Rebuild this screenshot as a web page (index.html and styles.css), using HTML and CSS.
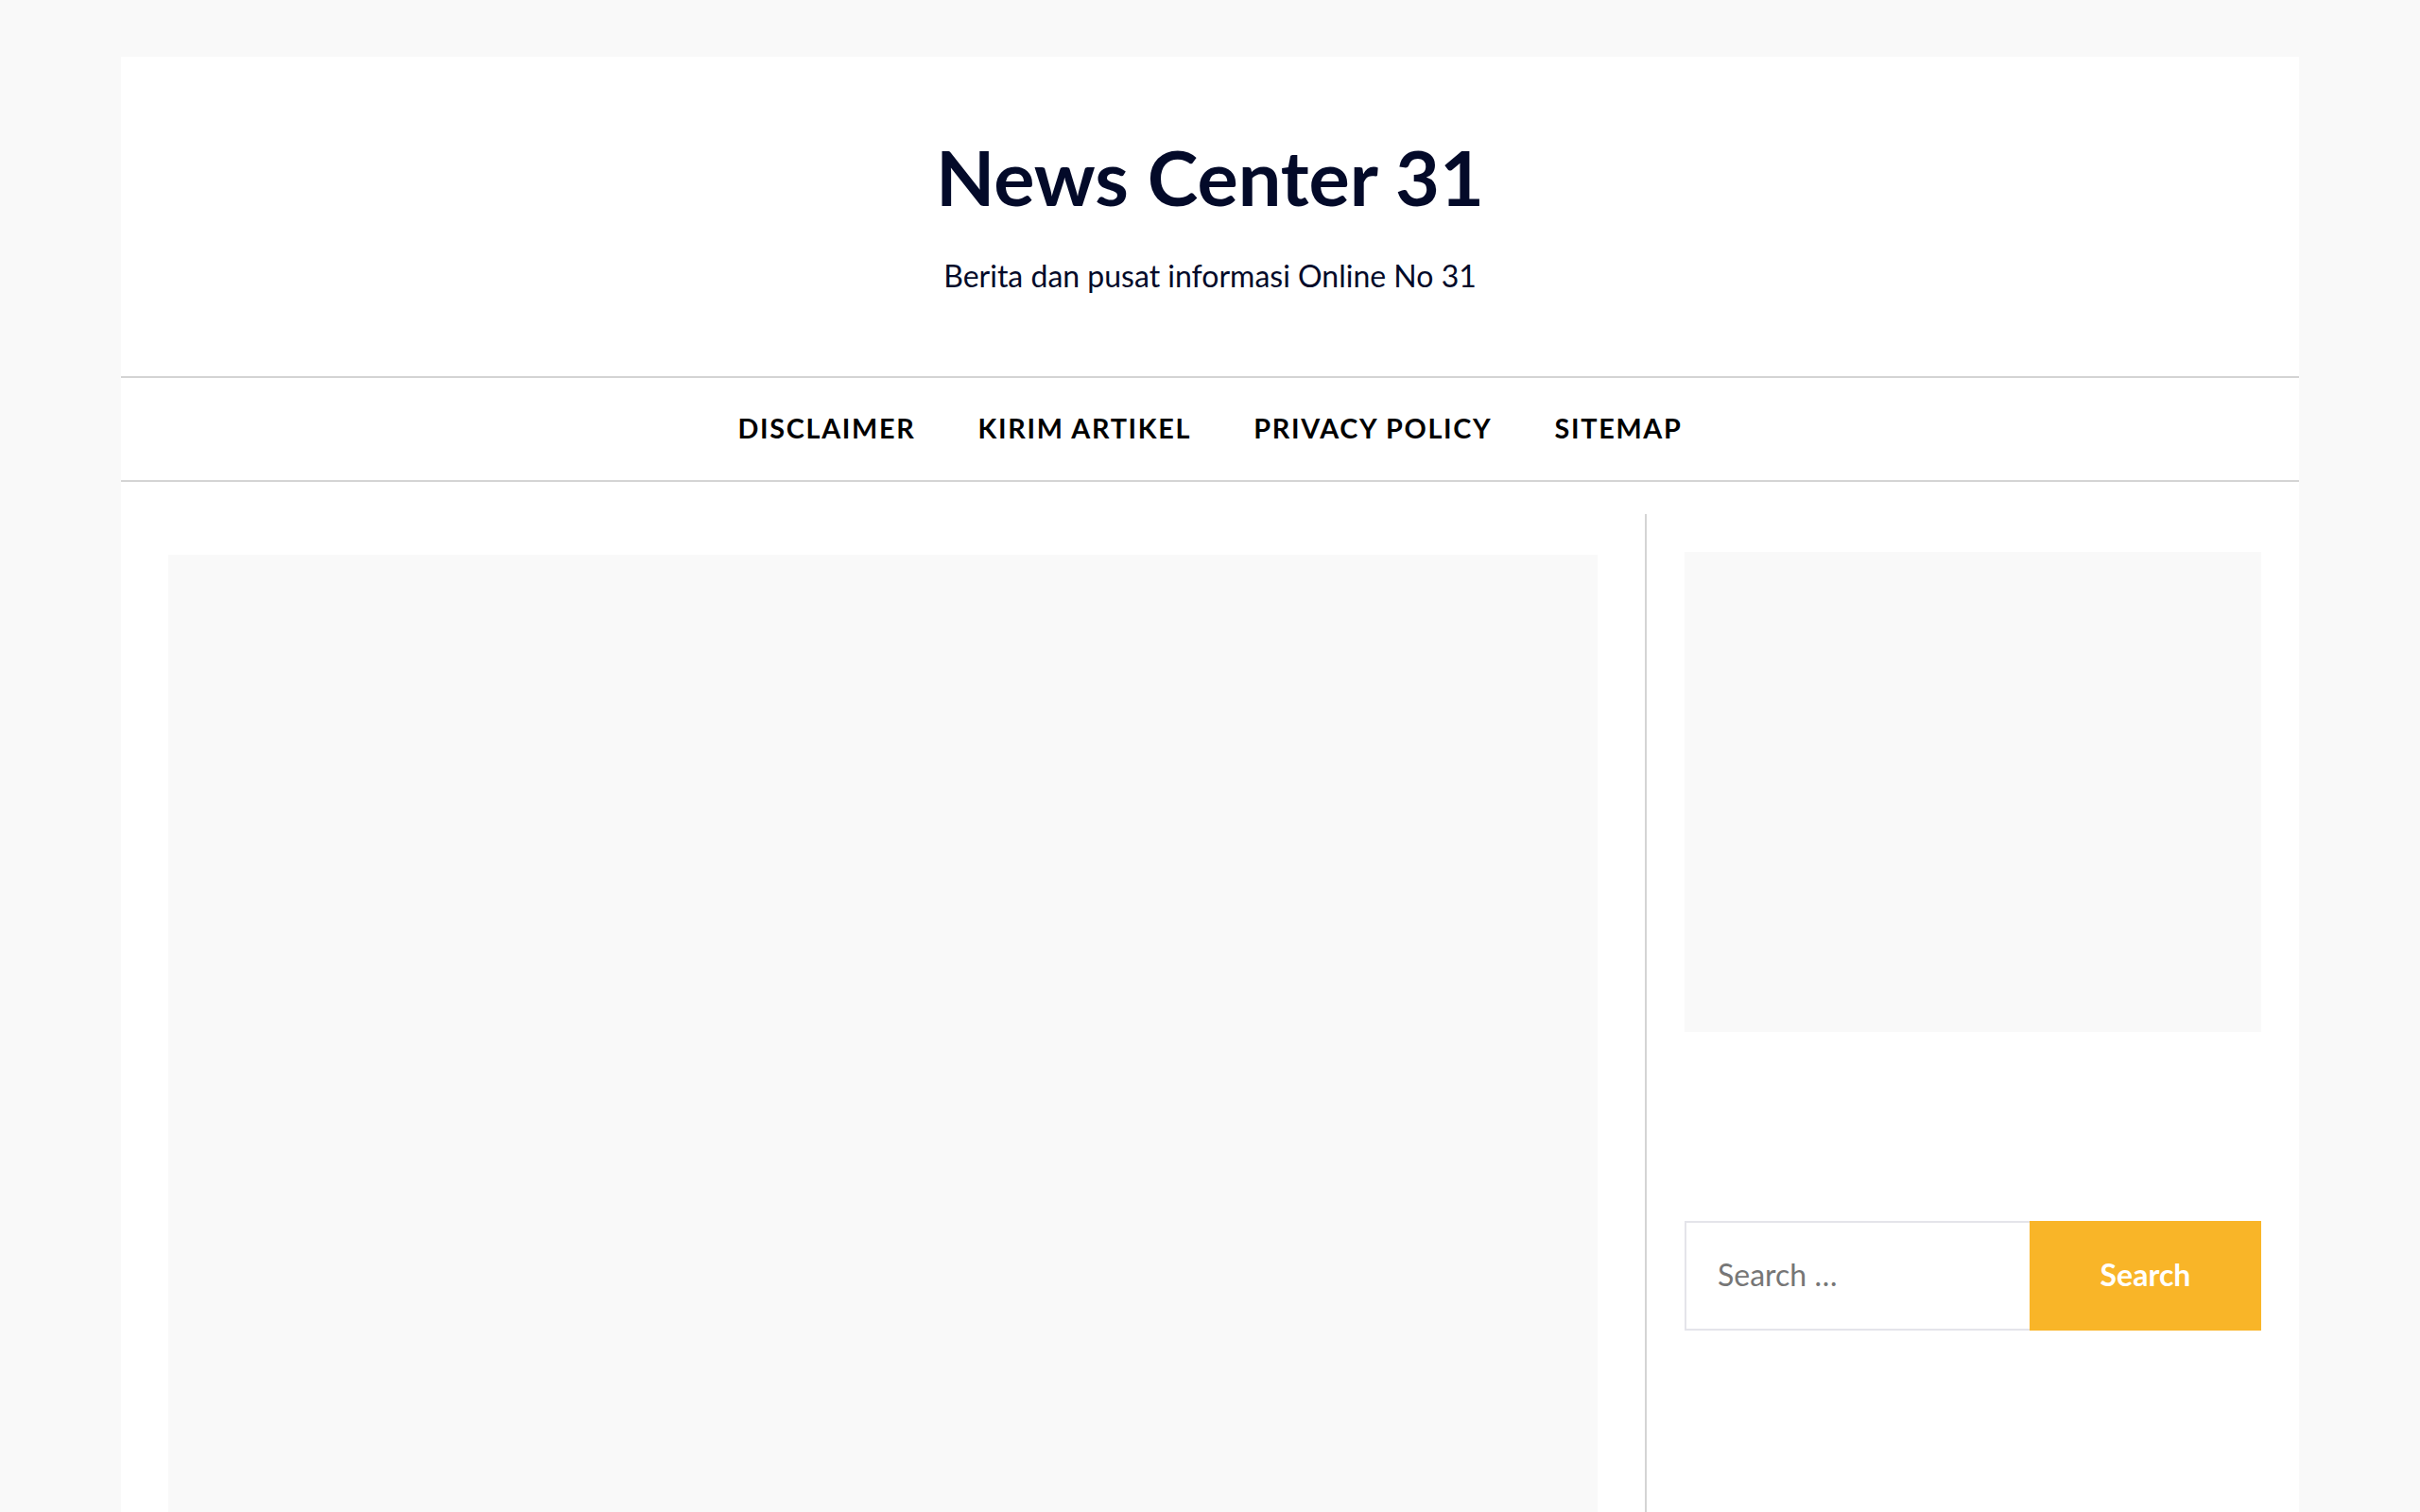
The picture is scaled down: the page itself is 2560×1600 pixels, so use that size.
FILE: index.html
```html
<!DOCTYPE html>
<html lang="id">
<head>
<meta charset="utf-8">
<title>News Center 31</title>
<link rel="stylesheet" href="styles.css">
</head>
<body>
<div class="site">
  <header class="site-header">
    <h1 class="site-title">News Center 31</h1>
    <p class="site-desc">Berita dan pusat informasi Online No 31</p>
  </header>
  <nav class="main-nav">
    <ul class="menu">
      <li><a href="#">DISCLAIMER</a></li>
      <li><a href="#">KIRIM ARTIKEL</a></li>
      <li><a href="#">PRIVACY POLICY</a></li>
      <li><a href="#">SITEMAP</a></li>
    </ul>
  </nav>
  <div class="content">
    <main class="primary">
      <div class="post-placeholder"></div>
    </main>
    <aside class="sidebar">
      <div class="widget-placeholder"></div>
      <form class="search-form" onsubmit="return false">
        <input class="search-field" type="search" placeholder="Search …">
        <button class="search-submit" type="submit">Search</button>
      </form>
    </aside>
  </div>
</div>
</body>
</html>
```
FILE: styles.css
```css
html, body {
  margin: 0;
  padding: 0;
  background: #f9f9f9;
  font-family: Lato, "Open Sans", sans-serif;
  height: 100%;
  overflow: hidden;
}
.site {
  width: 2304px;
  margin: 60px auto 0;
  background: #ffffff;
  min-height: 1600px;
}
.site-header {
  padding: 79px 0 82px;
  text-align: center;
}
.site-title {
  margin: 0;
  font-size: 81px;
  line-height: 96px;
  font-weight: 700;
  color: #030a29;
}
.site-desc {
  margin: 33px 0 0;
  font-size: 32px;
  line-height: 48px;
  color: #030a29;
}
.main-nav {
  border-top: 2px solid #d4d4d4;
  border-bottom: 2px solid #d4d4d4;
}
.menu {
  list-style: none;
  margin: 0;
  padding: 0;
  display: flex;
  justify-content: center;
  gap: 66px;
}
.menu a {
  display: block;
  line-height: 106px;
  padding-bottom: 2px;
  font-size: 28.8px;
  font-weight: 700;
  letter-spacing: 1.7px;
  color: #000;
  text-decoration: none;
}
.content {
  display: flex;
}
.primary {
  width: 1512px;
  padding: 43px 50px 0;
  margin-top: 34px;
  border-right: 2px solid #d4d4d4;
  min-height: 1100px;
}
.post-placeholder {
  height: 1100px;
  background: #f9f9f9;
}
.sidebar {
  width: 610px;
  padding: 74px 40px 0;
}
.widget-placeholder {
  height: 508px;
  background: #f9f9f9;
}
.search-form {
  display: flex;
  margin-top: 200px;
  height: 116px;
}
.search-field {
  box-sizing: border-box;
  width: 365px;
  height: 116px;
  border: 2px solid #e4e4ea;
  border-right: none;
  padding: 0 0 4px 33px;
  font-family: Lato, sans-serif;
  font-size: 32px;
  color: #333;
  background: #fff;
  outline: none;
  margin: 0;
}
.search-field::placeholder {
  color: #767676;
  opacity: 1;
}
.search-submit {
  width: 245px;
  height: 116px;
  border: none;
  margin: 0;
  padding: 0 0 4px;
  background: #f9b528;
  color: #fff;
  font-family: Lato, sans-serif;
  font-weight: 700;
  font-size: 32px;
  cursor: pointer;
}
```
